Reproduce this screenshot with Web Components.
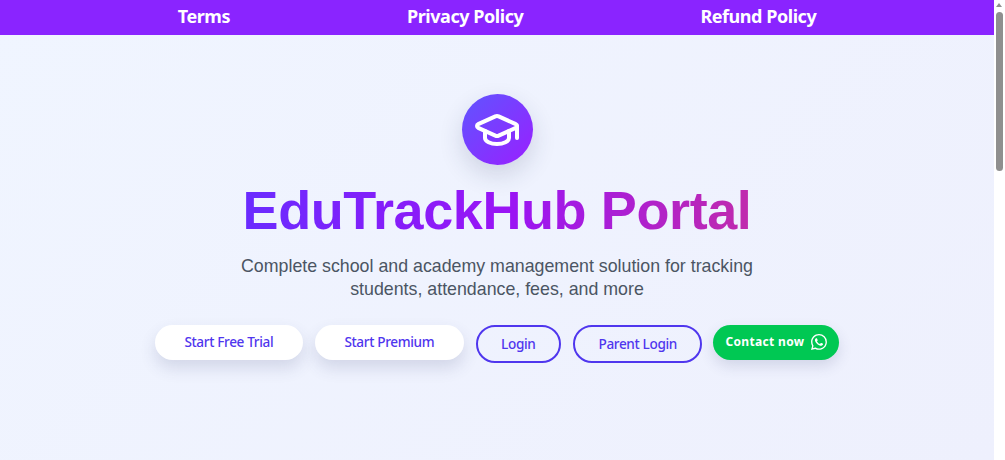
<!DOCTYPE html>
<html><head><meta charset="utf-8"><title>EduTrackHub Portal</title>
<style>
html,body{margin:0;height:100%;overflow:hidden}
body{display:flex;font-family:"Noto Sans",sans-serif}
</style></head>
<body>
<portal-page>
  <top-nav>
    <a>Terms</a><a>Privacy Policy</a><a>Refund Policy</a>
  </top-nav>
  <hero-section>
    <span slot="title">EduTrackHub Portal</span>
    <span slot="sub">Complete school and academy management solution for tracking students, attendance, fees, and more</span>
    <pill-btn kind="solid">Start Free Trial</pill-btn>
    <pill-btn kind="solid">Start Premium</pill-btn>
    <pill-btn kind="outline">Login</pill-btn>
    <pill-btn kind="outline">Parent Login</pill-btn>
    <pill-btn kind="green">Contact now</pill-btn>
  </hero-section>
</portal-page>
<fake-scrollbar></fake-scrollbar>
<script>
class PortalPage extends HTMLElement {
  connectedCallback() {
    this.attachShadow({ mode: 'open' }).innerHTML = `
      <style>:host{flex:1;min-width:0;display:flex;flex-direction:column;background:linear-gradient(135deg,#f0f5ff,#eef0fd)}</style>
      <slot></slot>`;
  }
}
class TopNav extends HTMLElement {
  connectedCallback() {
    this.attachShadow({ mode: 'open' }).innerHTML = `
      <style>
        :host{display:flex;height:35px;align-items:center;justify-content:center;gap:177px;background:#8a24ff;
          color:#fff;font:700 18px/1 "Noto Sans",sans-serif;letter-spacing:-.45px;padding-bottom:3px;box-sizing:border-box}
        ::slotted(a){cursor:pointer}
      </style><slot></slot>`;
  }
}
class HeroSection extends HTMLElement {
  connectedCallback() {
    this.attachShadow({ mode: 'open' }).innerHTML = `
      <style>
        :host{display:flex;flex-direction:column;align-items:center;padding-top:59px}
        .logo{width:71px;height:71px;border-radius:50%;display:flex;align-items:center;justify-content:center;
          background:linear-gradient(135deg,#5f55ff,#9a1fff);box-shadow:0 10px 25px rgba(40,50,90,.16)}
        h1{margin:13px 0 0;font:700 54px/64px "Liberation Sans",Arial,sans-serif;letter-spacing:-.4px;
          background:linear-gradient(90deg,#6a2bff,#9a14f5 52%,#c02bac);-webkit-background-clip:text;background-clip:text;color:transparent}
        p{margin:13px 0 0;width:560px;text-align:center;font:400 17.8px/23px "Liberation Sans",Arial,sans-serif;color:#4b5563}
        .btns{display:flex;gap:12px;margin-top:24px;align-items:flex-start}
      </style>
      <div class="logo"><svg width="48" height="48" viewBox="0 0 24 24" fill="none" stroke="#fff" stroke-width="2" stroke-linecap="round" stroke-linejoin="round"><path d="M21.42 10.922a1 1 0 0 0-.019-1.838L12.83 5.18a2 2 0 0 0-1.66 0L2.6 9.08a1 1 0 0 0 0 1.832l8.57 3.908a2 2 0 0 0 1.66 0z"/><path d="M22 10v6"/><path d="M6 12.5V16a6 3 0 0 0 12 0v-3.5"/></svg></div>
      <h1><slot name="title"></slot></h1>
      <p><slot name="sub"></slot></p>
      <div class="btns"><slot></slot></div>`;
  }
}
class PillBtn extends HTMLElement {
  connectedCallback() {
    const kind = this.getAttribute('kind');
    const wa = kind === 'green' ? `<svg width="16" height="16" viewBox="0 0 16 16" fill="#fff"><path d="M13.601 2.326A7.854 7.854 0 0 0 7.994 0C3.627 0 .068 3.558.064 7.926c0 1.399.366 2.76 1.057 3.965L0 16l4.204-1.102a7.933 7.933 0 0 0 3.79.965h.004c4.368 0 7.926-3.558 7.93-7.93A7.898 7.898 0 0 0 13.6 2.326zM7.994 14.521a6.573 6.573 0 0 1-3.356-.92l-.24-.144-2.494.654.666-2.433-.156-.251a6.56 6.56 0 0 1-1.007-3.505c0-3.626 2.957-6.584 6.591-6.584a6.56 6.56 0 0 1 4.66 1.931 6.557 6.557 0 0 1 1.928 4.66c-.004 3.639-2.961 6.592-6.592 6.592zm3.615-4.934c-.197-.099-1.17-.578-1.353-.646-.182-.065-.315-.099-.445.099-.133.197-.513.646-.627.775-.114.133-.232.148-.43.05-.197-.1-.836-.308-1.592-.985-.59-.525-.985-1.175-1.103-1.372-.114-.198-.011-.304.088-.403.087-.088.197-.232.296-.346.1-.114.133-.198.198-.33.065-.134.034-.248-.015-.347-.05-.099-.445-1.076-.612-1.47-.16-.389-.323-.335-.445-.34-.114-.007-.247-.007-.38-.007a.729.729 0 0 0-.529.247c-.182.198-.691.677-.691 1.654 0 .977.71 1.916.81 2.049.098.133 1.394 2.132 3.383 2.992.47.205.84.326 1.129.418.475.152.904.129 1.246.08.38-.058 1.171-.48 1.338-.943.164-.464.164-.86.114-.943-.049-.084-.182-.133-.38-.232z"/></svg>` : '';
    this.attachShadow({ mode: 'open' }).innerHTML = `
      <style>
        :host{display:inline-flex;align-items:center;justify-content:center;box-sizing:border-box;border-radius:999px;
          font:500 13.6px/1 "Noto Sans",sans-serif;letter-spacing:-.36px;color:#4f36ee;cursor:pointer;white-space:nowrap}
        :host([kind=solid]){background:#fff;height:35px;width:148.5px;padding-bottom:2px;box-shadow:0 8px 16px rgba(60,70,120,.16)}
        :host([kind=outline]){height:38px;padding:0 23.5px 1px;border:2px solid #4f36ee}
        :host([kind=green]){background:#00c853;color:#fff;height:35px;width:126px;gap:7px;font-size:12px;font-weight:700;letter-spacing:.35px;padding-bottom:1px;box-shadow:0 6px 14px rgba(60,70,120,.16);margin-left:-1px}
      </style><slot></slot>${wa}`;
  }
}
class FakeScrollbar extends HTMLElement {
  connectedCallback() {
    this.attachShadow({ mode: 'open' }).innerHTML = `
      <style>
        :host{width:11px;flex:none;background:#fff;position:relative;display:block}
        .thumb{position:absolute;left:2px;right:2px;top:12px;height:159px;background:#8f8f8f;border-radius:4px}
        .up{position:absolute;left:2px;top:0;width:0;height:0;border:3.5px solid transparent;border-bottom:4px solid #8f8f8f}
      </style><div class="up"></div><div class="thumb"></div>`;
  }
}
customElements.define('portal-page', PortalPage);
customElements.define('top-nav', TopNav);
customElements.define('hero-section', HeroSection);
customElements.define('pill-btn', PillBtn);
customElements.define('fake-scrollbar', FakeScrollbar);
</script>
</body></html>
